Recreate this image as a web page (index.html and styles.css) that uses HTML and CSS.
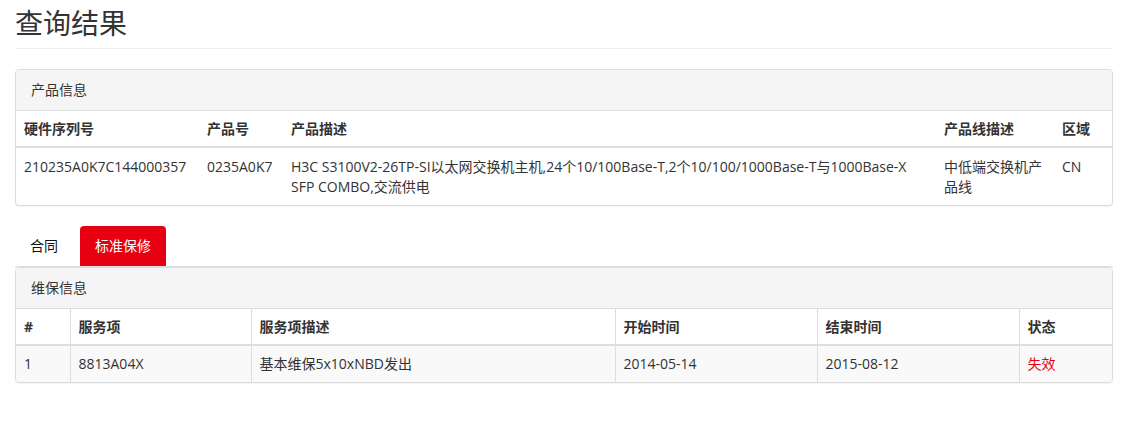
FILE: index.html
```html
<!DOCTYPE html>
<html lang="zh-CN">
<head>
<meta charset="utf-8">
<title>查询结果</title>
<link rel="stylesheet" href="styles.css">
</head>
<body>
<div class="container">
  <div class="page-header">
    <h1>查询结果</h1>
  </div>

  <div class="panel">
    <div class="panel-heading">产品信息</div>
    <table class="table table-product">
      <thead>
        <tr>
          <th class="c-sn">硬件序列号</th>
          <th class="c-pn">产品号</th>
          <th class="c-desc">产品描述</th>
          <th class="c-line">产品线描述</th>
          <th class="c-region">区域</th>
        </tr>
      </thead>
      <tbody>
        <tr>
          <td>210235A0K7C144000357</td>
          <td>0235A0K7</td>
          <td>H3C S3100V2-26TP-SI以太网交换机主机,24个10/100Base-T,2个10/100/1000Base-T与1000Base-X SFP COMBO,交流供电</td>
          <td>中低端交换机产品线</td>
          <td>CN</td>
        </tr>
      </tbody>
    </table>
  </div>

  <ul class="nav-tabs">
    <li class="tab">合同</li>
    <li class="tab active">标准保修</li>
  </ul>

  <div class="panel panel-tabbed">
    <div class="panel-heading">维保信息</div>
    <table class="table table-bordered table-striped table-warranty">
      <thead>
        <tr>
          <th class="w-idx">#</th>
          <th class="w-item">服务项</th>
          <th class="w-desc">服务项描述</th>
          <th class="w-start">开始时间</th>
          <th class="w-end">结束时间</th>
          <th class="w-state">状态</th>
        </tr>
      </thead>
      <tbody>
        <tr>
          <td>1</td>
          <td>8813A04X</td>
          <td>基本维保5x10xNBD发出</td>
          <td>2014-05-14</td>
          <td>2015-08-12</td>
          <td class="expired">失效</td>
        </tr>
      </tbody>
    </table>
  </div>
</div>
</body>
</html>
```

FILE: styles.css
```css
* { box-sizing: border-box; }

html, body {
  margin: 0;
  padding: 0;
  background: #fff;
}

body {
  font-family: "Open Sans", "Noto Sans CJK SC", sans-serif;
  font-size: 14px;
  line-height: 20px;
  color: #333;
}

.container {
  padding: 8px 25px 0 15px;
}

.page-header {
  border-bottom: 1px solid #eee;
  padding-bottom: 9px;
  margin-bottom: 20px;
}

.page-header h1 {
  margin: 0;
  font-size: 28px;
  line-height: 31px;
  font-weight: 400;
  color: #333;
}

.panel {
  border: 1px solid #ddd;
  border-radius: 4px;
  background: #fff;
  box-shadow: 0 1px 1px rgba(0,0,0,0.05);
  margin-bottom: 20px;
  overflow: hidden;
}

.panel-heading {
  background: #f5f5f5;
  border-bottom: 1px solid #ddd;
  padding: 10px 15px;
  color: #333;
}

.table {
  width: 100%;
  border-collapse: collapse;
  table-layout: fixed;
}

.table th,
.table td {
  padding: 8px;
  text-align: left;
  vertical-align: top;
  line-height: 20px;
}

.table th {
  font-weight: 700;
  border-bottom: 2px solid #ddd;
}

.table-product th {
  padding-top: 8px;
  padding-bottom: 7px;
}

.table-product td {
  padding-top: 9px;
  padding-bottom: 8px;
}

.c-sn { width: 183px; }
.c-pn { width: 84px; }
.c-desc { width: 653px; }
.c-line { width: 118px; }
.c-region { width: auto; }

.nav-tabs {
  list-style: none;
  margin: 0;
  padding: 0;
  display: flex;
  border-bottom: 1px solid #ddd;
}

.tab {
  padding: 10px 15px;
  color: #111;
  border-radius: 4px 4px 0 0;
  line-height: 20px;
  margin-right: 7px;
}

.tab.active {
  background: #e60012;
  color: #fff;
}

.panel-tabbed {
  border-radius: 4px;
}

.table-bordered th,
.table-bordered td {
  border: 1px solid #ddd;
}

.table-bordered tr > :first-child { border-left: 0; }
.table-bordered tr > :last-child { border-right: 0; }
.table-bordered tbody tr:last-child td { border-bottom: 0; }

.table-bordered th {
  border-top: 0;
  border-bottom: 2px solid #ddd;
  padding-bottom: 7px;
}

.table-striped tbody tr:nth-child(odd) {
  background: #f9f9f9;
}

.w-idx { width: 54px; }
.w-item { width: 181px; }
.w-desc { width: 364px; }
.w-start { width: 202px; }
.w-end { width: 202px; }
.w-state { width: auto; }

.expired {
  color: #e60012;
}
```
